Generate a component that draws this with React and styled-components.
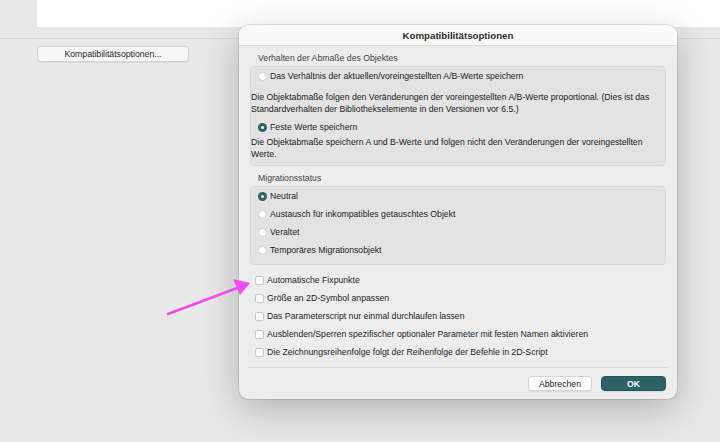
import React from 'react'
import styled, { createGlobalStyle } from 'styled-components'

const Global = createGlobalStyle`
  html, body { margin: 0; padding: 0; }
  body {
    font-family: "Liberation Sans", Arial, sans-serif;
    background: #e8e8e8;
  }
`

const Page = styled.div`
  position: relative;
  width: 720px;
  height: 442px;
  overflow: hidden;
  background: #e8e8e8;
`

const TopPanel = styled.div`
  margin-left: 37px;
  height: 27px;
  background: #ffffff;
`

const Strip = styled.div`
  height: 11px;
  border-bottom: 1px solid #d9d9d9;
`

const BgButton = styled.button`
  margin: 7px 0 0 37px;
  width: 152px;
  height: 16px;
  padding: 0;
  border: 1px solid #d2d2d2;
  border-radius: 4px;
  background: #f7f7f7;
  box-shadow: 0 1px 1px rgba(0, 0, 0, 0.06);
  font-family: "Liberation Sans", Arial, sans-serif;
  font-size: 8.7px;
  color: #1e1e1e;
  display: flex;
  align-items: center;
  justify-content: center;
`

const Dialog = styled.div`
  position: absolute;
  left: 239px;
  top: 25px;
  width: 438px;
  height: 374px;
  border-radius: 9px;
  background: #ededed;
  box-shadow: 0 0 0 0.5px rgba(0, 0, 0, 0.18), 0 10px 36px rgba(0, 0, 0, 0.24);
  overflow: hidden;
  display: flex;
  flex-direction: column;
`

const TitleBar = styled.div`
  height: 20px;
  background: #fafafa;
  border-bottom: 1px solid #dadada;
  display: flex;
  align-items: center;
  justify-content: center;
  font-weight: bold;
  font-size: 9.7px;
  color: #2e2e2e;
`

const Body = styled.div`
  padding: 0 11px;
  display: flex;
  flex-direction: column;
`

const SectionLabel = styled.div`
  padding: 6px 0 0 8px;
  height: 14px;
  line-height: 12px;
  font-size: 8.7px;
  color: #444;
`

const Group = styled.div`
  background: #e3e3e3;
  border: 1px solid #dadada;
  border-radius: 4px;
  padding: ${p => p.$pad};
  display: flex;
  flex-direction: column;
`

const Row = styled.label`
  display: flex;
  align-items: center;
  gap: 3px;
  height: ${p => p.$h || 18}px;
  margin-top: ${p => p.$mt || 0}px;
  font-size: 8.7px;
  color: #1e1e1e;
`

const Desc = styled.div`
  font-size: 8.7px;
  line-height: 11.5px;
  color: #222;
  margin: ${p => p.$m};
`

const Radio = styled.span`
  width: 9px;
  height: 9px;
  border-radius: 50%;
  box-sizing: border-box;
  flex: none;
  margin-left: 7px;
  background: ${p => (p.$on ? '#2b6267' : '#ffffff')};
  border: ${p => (p.$on ? 'none' : '1px solid #cfcfcf')};
  display: flex;
  align-items: center;
  justify-content: center;
  &::after {
    content: '';
    display: ${p => (p.$on ? 'block' : 'none')};
    width: 3px;
    height: 3px;
    border-radius: 50%;
    background: #fff;
  }
`

const Checks = styled.div`
  padding: 6px 0 0 5px;
  display: flex;
  flex-direction: column;
`

const Box = styled.span`
  width: 9px;
  height: 9px;
  box-sizing: border-box;
  flex: none;
  border: 1px solid #c9c9c9;
  border-radius: 2px;
  background: #fff;
`

const Separator = styled.div`
  margin: 6px -2px 0 -2px;
  border-top: 1px solid #d8d8d8;
`

const Footer = styled.div`
  display: flex;
  justify-content: flex-end;
  gap: 9px;
  padding: 8px 0 0 0;
`

const Button = styled.button`
  height: 15px;
  width: ${p => p.$w}px;
  padding: 0;
  border-radius: 4px;
  font-family: "Liberation Sans", Arial, sans-serif;
  font-size: 8.7px;
  display: flex;
  align-items: center;
  justify-content: center;
  border: ${p => (p.$primary ? '1px solid #24555a' : '1px solid #d4d4d4')};
  background: ${p => (p.$primary ? '#2b6267' : '#ffffff')};
  color: ${p => (p.$primary ? '#ffffff' : '#222')};
  font-weight: ${p => (p.$primary ? 'bold' : 'normal')};
  box-shadow: 0 1px 1px rgba(0, 0, 0, 0.08);
`

const Arrow = styled.svg`
  position: absolute;
  left: 160px;
  top: 275px;
`

const checks = [
  'Automatische Fixpunkte',
  'Größe an 2D-Symbol anpassen',
  'Das Parameterscript nur einmal durchlaufen lassen',
  'Ausblenden/Sperren spezifischer optionaler Parameter mit festen Namen aktivieren',
  'Die Zeichnungsreihenfolge folgt der Reihenfolge der Befehle in 2D-Script',
]

const migration = [
  ['Neutral', true],
  ['Austausch für inkompatibles getauschtes Objekt', false],
  ['Veraltet', false],
  ['Temporäres Migrationsobjekt', false],
]

export default function App() {
  return (
    <Page>
      <Global />
      <TopPanel />
      <Strip />
      <BgButton>Kompatibilitätsoptionen...</BgButton>

      <Dialog>
        <TitleBar>Kompatibilitätsoptionen</TitleBar>
        <Body>
          <SectionLabel>Verhalten der Abmaße des Objektes</SectionLabel>
          <Group $pad="2px 8px 5px 0">
            <Row $h={14}>
              <Radio />
              Das Verhältnis der aktuellen/voreingestellten A/B-Werte speichern
            </Row>
            <Desc $m="9px 0 0 0">
              Die Objektabmaße folgen den Veränderungen der voreingestellten A/B-Werte proportional. (Dies ist das
              <br />
              Standardverhalten der Bibliothekselemente in den Versionen vor 6.5.)
            </Desc>
            <Row $h={14} $mt={5}>
              <Radio $on />
              Feste Werte speichern
            </Row>
            <Desc $m="3px 0 0 0">
              Die Objektabmaße speichern A und B-Werte und folgen nicht den Veränderungen der voreingestellten
              <br />
              Werte.
            </Desc>
          </Group>

          <SectionLabel>Migrationsstatus</SectionLabel>
          <Group $pad="0 0 5px 0">
            {migration.map(([t, on]) => (
              <Row key={t}>
                <Radio $on={on} />
                {t}
              </Row>
            ))}
          </Group>

          <Checks>
            {checks.map(t => (
              <Row key={t}>
                <Box />
                {t}
              </Row>
            ))}
          </Checks>

          <Separator />
          <Footer>
            <Button $w={64}>Abbrechen</Button>
            <Button $w={65} $primary>OK</Button>
          </Footer>
        </Body>
      </Dialog>

      <Arrow width="100" height="45" viewBox="0 0 100 45">
        <line x1="8" y1="39" x2="80" y2="12" stroke="#f04cf0" strokeWidth="2.6" strokeLinecap="round" />
        <polygon points="90,8 73,4 80,20" fill="#f04cf0" />
      </Arrow>
    </Page>
  )
}
